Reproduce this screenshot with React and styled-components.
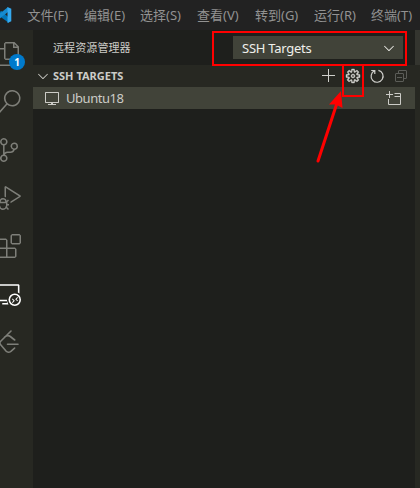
import React from 'react';
import styled, { createGlobalStyle } from 'styled-components';
import {
  VscFiles, VscSearch, VscSourceControl, VscDebugAlt, VscExtensions, VscRemoteExplorer,
  VscAdd, VscGear, VscCollapseAll, VscVm, VscChevronDown,
} from 'react-icons/vsc';

const GlobalStyle = createGlobalStyle`
  * { box-sizing: border-box; }
  body { margin: 0; background: #1e1f1c; overflow: hidden; }
  svg { display: block; flex: none; }
`;

const Window = styled.div`
  position: relative;
  width: 420px;
  height: 488px;
  display: flex;
  flex-direction: column;
  overflow: hidden;
  font-family: "Noto Sans", "Noto Sans CJK SC", sans-serif;
  font-size: 13px;
  color: #ccccc7;
`;
const MenuBar = styled.header`
  height: 30px;
  flex: none;
  display: flex;
  align-items: center;
  background: #222222;
  color: #929292;
`;
const Logo = styled.svg`
  width: 12px;
  height: 16px;
  margin-right: 15.5px;
`;
const MenuItem = styled.span`
  width: ${(p) => p.$width}px;
  flex: none;
  white-space: nowrap;
  line-height: 20px;
`;
const Body = styled.div`
  flex: 1;
  display: flex;
  min-height: 0;
`;
const ActivityBar = styled.nav`
  width: 33px;
  flex: none;
  background: #272822;
  overflow: hidden;
`;
const Activity = styled.div`
  position: relative;
  width: 48px;
  height: 48px;
  margin-left: -15px;
  display: flex;
  align-items: center;
  justify-content: center;
  color: ${(p) => (p.$active ? '#ffffff' : '#7e7f79')};
`;
const Badge = styled.span`
  position: absolute;
  left: 24px;
  top: 24px;
  width: 16px;
  height: 16px;
  border-radius: 8px;
  background: #007acc;
  color: #fff;
  font-size: 10px;
  font-weight: 700;
  line-height: 16px;
  text-align: center;
`;
const Sidebar = styled.main`
  width: 382px;
  flex: none;
  background: #1e1f1c;
`;
const TitleRow = styled.div`
  height: 35px;
  display: flex;
  align-items: center;
  justify-content: space-between;
  padding: 0 12px 0 20px;
`;
const Title = styled.span`
  font-size: 11px;
  letter-spacing: 0.1px;
  line-height: 16px;
`;
const Select = styled.div`
  width: 170px;
  height: 23px;
  padding: 0 6px 0 9px;
  display: flex;
  align-items: center;
  justify-content: space-between;
  background: #414339;
  color: #f0f0eb;
  letter-spacing: -0.25px;
`;
const SectionHeader = styled.div`
  height: 22px;
  display: flex;
  align-items: center;
  padding: 0 6px 0 2px;
  background: #272822;
`;
const SectionTitle = styled.span`
  flex: 1;
  margin-left: 2px;
  padding-bottom: 2px;
  font-size: 11px;
  font-weight: 700;
`;
const Actions = styled.div`
  display: flex;
  gap: 8px;
  color: #cfcfcb;
`;
const BoldGear = styled(VscGear)`
  stroke: currentColor;
  stroke-width: 0.4px;
`;
const Dimmed = styled.span`
  color: #5c5d58;
`;
const TargetRow = styled.div`
  height: 22px;
  display: flex;
  align-items: center;
  padding: 0 14px 0 11px;
  background: #414339;
`;
const TargetName = styled.span`
  flex: 1;
  margin-left: 6px;
  letter-spacing: -0.45px;
`;
const EditorEdge = styled.div`
  flex: 1;
  background: #272822;
`;
const EditorTab = styled.div`
  height: 35px;
  background: #34352f;
`;
const Highlight = styled.div`
  position: absolute;
  left: ${(p) => p.$x}px;
  top: ${(p) => p.$y}px;
  width: ${(p) => p.$w}px;
  height: ${(p) => p.$h}px;
  border: 2px solid #ff0000;
`;
const Arrow = styled.svg`
  position: absolute;
  left: 310px;
  top: 86px;
`;

const MENUS = [
  ['文件(F)', 56.5], ['编辑(E)', 56], ['选择(S)', 57], ['查看(V)', 58],
  ['转到(G)', 59], ['运行(R)', 57], ['终端(T)', 50],
];

const LeetCodeIcon = () => (
  <svg width="24" height="24" viewBox="0 0 24 24" fill="none" stroke="currentColor" strokeWidth="1.6" strokeLinecap="round">
    <path d="M14 1 3.7 11.3a2.5 2.5 0 0 0 0 3.5l5.5 6.5c1 1.1 3.3 1.1 4.7 0l3.7-3.2M7.6 7.2c1.4-1.3 3.4-2.4 5.7-.7l4.4 3.5M10.5 14.2h10.5" />
  </svg>
);

const RefreshIcon = () => (
  <svg width="16" height="16" viewBox="0 0 16 16" fill="none" stroke="currentColor" strokeWidth="1.2">
    <path d="M2.2 2.5h3.6v3.6M5.6 2.8A6 6 0 1 0 9.4 2.4" />
  </svg>
);

const NewWindowIcon = () => (
  <svg width="16" height="16" viewBox="0 0 16 16" fill="none" stroke="currentColor">
    <path d="M4.5 1v7M1 4.5h7M9.5 3.5h6v11h-12V9M9.5 6.5h6" />
  </svg>
);

export default function App() {
  return (
    <Window>
      <GlobalStyle />
      <MenuBar>
        <Logo viewBox="0 0 12 16">
          <path d="M0 4.8 1.5 4 9 10.8V16L0 9.6Z" fill="#0075b8" />
          <path d="M0 6.6 8 0v5L1.6 10 0 11.4Z" fill="#168bd0" />
          <path d="M7.5 0 11.3 1.8v12.4L7.5 16Z" fill="#35a9ef" />
        </Logo>
        {MENUS.map(([label, width]) => <MenuItem key={label} $width={width}>{label}</MenuItem>)}
      </MenuBar>
      <Body>
        <ActivityBar>
          <Activity><VscFiles size={24} /><Badge>1</Badge></Activity>
          <Activity><VscSearch size={24} /></Activity>
          <Activity><VscSourceControl size={24} /></Activity>
          <Activity><VscDebugAlt size={24} /></Activity>
          <Activity><VscExtensions size={24} /></Activity>
          <Activity $active><VscRemoteExplorer size={24} /></Activity>
          <Activity><LeetCodeIcon /></Activity>
        </ActivityBar>
        <Sidebar>
          <TitleRow>
            <Title>远程资源管理器</Title>
            <Select>SSH Targets<VscChevronDown size={16} /></Select>
          </TitleRow>
          <SectionHeader>
            <VscChevronDown size={16} />
            <SectionTitle>SSH TARGETS</SectionTitle>
            <Actions>
              <VscAdd size={16} />
              <BoldGear size={16} />
              <RefreshIcon />
              <Dimmed><VscCollapseAll size={16} /></Dimmed>
            </Actions>
          </SectionHeader>
          <TargetRow>
            <VscVm size={16} />
            <TargetName>Ubuntu18</TargetName>
            <NewWindowIcon />
          </TargetRow>
        </Sidebar>
        <EditorEdge><EditorTab /></EditorEdge>
      </Body>
      <Highlight $x={212} $y={31} $w={195} $h={35} />
      <Highlight $x={342} $y={64} $w={22} $h={33} />
      <Arrow width="40" height="80" viewBox="0 0 40 80">
        <path d="M8 75 27 17" stroke="#ff0000" strokeWidth="3" strokeLinecap="round" />
        <path d="M31 5 32.5 22 26 18.5 19 18.5Z" fill="#ff0000" />
      </Arrow>
    </Window>
  );
}
